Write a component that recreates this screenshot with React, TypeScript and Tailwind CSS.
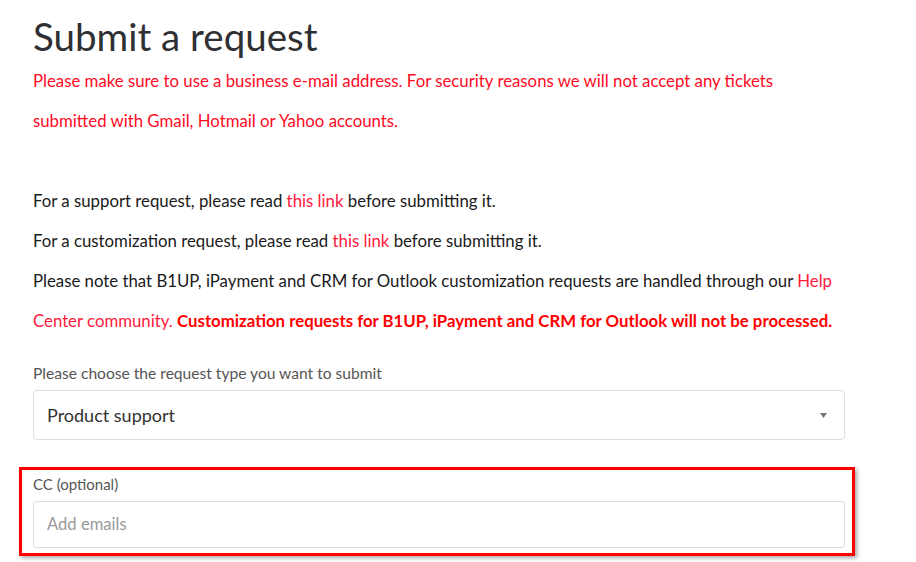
import React from "react";

export default function App() {
  const font = { fontFamily: "Lato, 'Noto Sans', sans-serif" };
  return (
    <div className="w-[916px] h-[562px] bg-white overflow-hidden" style={font}>
      <div className="pl-[33px] w-[845px]">
        <h1 className="pt-[11px] text-[38.5px] leading-[50px] text-[#2f3033] font-normal">Submit a request</h1>
        <div className="text-[16.8px] leading-[40px] text-[#ff0a1e]">
          <p>Please make sure to use a business e-mail address. For security reasons we will not accept any tickets</p>
          <p>submitted with Gmail, Hotmail or Yahoo accounts.</p>
        </div>
        <div className="h-[40px]" />
        <div className="text-[16.8px] leading-[40px] text-[#1a1a1a]">
          <p>For a support request, please read <span className="text-[#ff1a3c]">this link</span> before submitting it.</p>
          <p>For a customization request, please read <span className="text-[#ff1a3c]">this link</span> before submitting it.</p>
          <p>
            Please note that B1UP, iPayment and CRM for Outlook customization requests are handled through our{" "}
            <span className="text-[#ff1a3c]">Help Center community.</span>{" "}
            <span className="text-[#ff0000] font-bold">Customization requests for B1UP, iPayment and CRM for Outlook will not be processed.</span>
          </p>
        </div>
        <div className="mt-[22px] text-[15.6px] leading-[20px] text-[#555]">Please choose the request type you want to submit</div>
        <div className="mt-[7px] h-[50px] border border-[#ddd] rounded-[4px] flex items-center justify-between pl-[13px] pr-[17px]">
          <span className="text-[18px] text-[#333]">Product support</span>
          <svg width="7" height="5" viewBox="0 0 7 5"><polygon points="0,0 7,0 3.5,5" fill="#777" /></svg>
        </div>
        <div className="mt-[27px] -ml-[14px] w-[836px] border-[3px] border-[#ff0000] shadow-[2px_2px_4px_rgba(0,0,0,0.35)] pl-[11px] pr-[7px] pt-[3px] pb-[5px]">
          <div className="text-[15px] leading-[22px] text-[#555]">CC (optional)</div>
          <div className="mt-[6px] h-[47px] border border-[#ddd] rounded-[3px] flex items-center pl-[13px]">
            <span className="text-[16.6px] text-[#999]">Add emails</span>
          </div>
        </div>
      </div>
    </div>
  );
}
